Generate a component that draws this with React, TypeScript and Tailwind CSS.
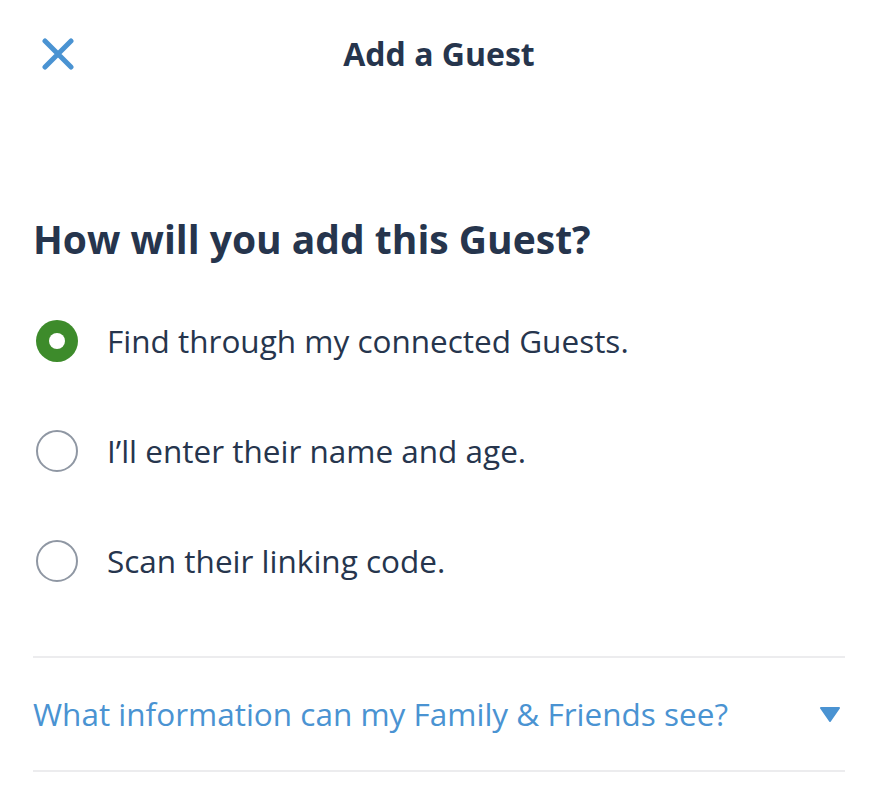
import React from "react";

const font = { fontFamily: "'Open Sans', 'Noto Sans', sans-serif" };

function Radio({ checked }: { checked?: boolean }) {
  if (checked) {
    return (
      <div className="w-[42px] h-[42px] rounded-full bg-[#3d8b2b] flex items-center justify-center shrink-0">
        <div className="w-[16px] h-[16px] rounded-full bg-white" />
      </div>
    );
  }
  return <div className="w-[42px] h-[42px] rounded-full border-2 border-[#8f97a3] bg-white shrink-0" />;
}

function Option({ checked, label }: { checked?: boolean; label: string }) {
  return (
    <div className="flex items-center h-[110px] pl-[36px]">
      <Radio checked={checked} />
      <span className="ml-[29px] text-[31.5px] text-[#26354d] leading-none">{label}</span>
    </div>
  );
}

export default function App() {
  return (
    <div className="w-[878px] h-[800px] bg-white overflow-hidden" style={font}>
      <div className="grid grid-cols-[1fr_auto_1fr] items-center h-[108px]">
        <div className="pl-[42px] flex items-center">
          <svg width="32" height="32" viewBox="0 0 32 32">
            <path d="M3 3 L29 29 M29 3 L3 29" stroke="#4a93d2" strokeWidth="5" strokeLinecap="round" fill="none" />
          </svg>
        </div>
        <div className="text-[32px] font-bold text-[#26354d] leading-none">Add a Guest</div>
        <div />
      </div>
      <div className="px-[33px]">
        <h1 className="mt-[109px] text-[39px] font-bold text-[#26354d] leading-[44px]">How will you add this Guest?</h1>
      </div>
      <div className="mt-[25px]">
        <Option checked label="Find through my connected Guests." />
        <Option label="I’ll enter their name and age." />
        <Option label="Scan their linking code." />
      </div>
      <div className="mx-[33px] mt-[40px] border-t-2 border-[#ececee]">
        <div className="flex items-center justify-between h-[112px]">
          <span className="text-[31.5px] text-[#4a93d2] leading-none">What information can my Family &amp; Friends see?</span>
          <svg width="22" height="16" viewBox="0 0 22 16" className="mr-[4px]">
            <path d="M2 2 H20 L11 15 Z" fill="#4a93d2" stroke="#4a93d2" strokeWidth="2" strokeLinejoin="round" />
          </svg>
        </div>
      </div>
      <div className="mx-[33px] border-t-2 border-[#ececee]" />
    </div>
  );
}
